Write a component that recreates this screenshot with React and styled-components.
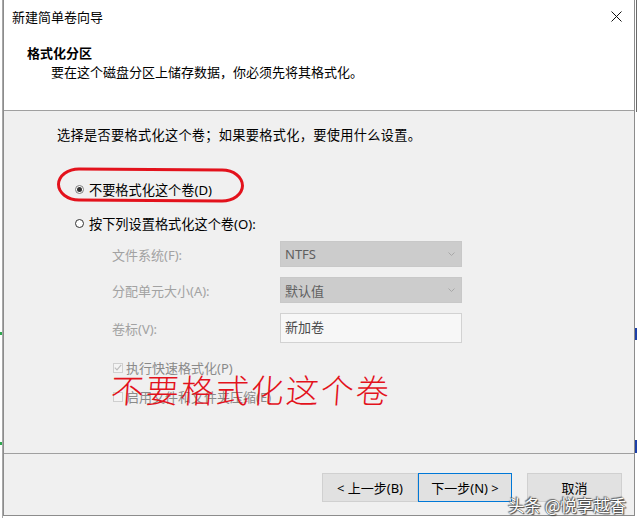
import React from "react";
import styled, { createGlobalStyle } from "styled-components";

const GlobalStyle = createGlobalStyle`
  html, body { margin: 0; padding: 0; background: #fff; }
  body {
    font-family: "Noto Sans", "Noto Sans CJK SC", sans-serif;
    font-size: 13px;
    color: #000;
  }
`;

const Screen = styled.div`
  display: flex;
  align-items: flex-start;
  width: 640px;
  height: 526px;
  overflow: hidden;
  background: #fff;
`;

const LeftStrip = styled.div`
  width: 2px;
  height: 518px;
  border-right: 1px solid #a8a8a8;
  background:
    linear-gradient(#fff 332px, #2fa84f 332px, #2fa84f 335px, #fff 335px, #fff 442px, #2fa84f 442px, #2fa84f 445px, #fff 445px);
`;

const RightStrip = styled.div`
  flex: 1;
  height: 526px;
  background:
    linear-gradient(90deg, transparent 1px, #6a6a6a 1px, #6a6a6a 2px, transparent 2px) 0 0 / 100% 112px no-repeat,
    linear-gradient(#fff 328px, #1c3fa8 328px, #1c3fa8 340px, #fff 340px, #fff 440px, #1c3fa8 440px, #1c3fa8 453px, #fff 453px) 0 0 / 2px 100% no-repeat,
    #fff;
`;

const Dialog = styled.div`
  position: relative;
  display: flex;
  flex-direction: column;
  box-sizing: border-box;
  width: 632px;
  height: 516px;
  border: 1px solid #8c8c8c;
  border-top: 0;
  background: #f0f0f0;
  font-family: "Noto Sans", "Noto Sans CJK SC", sans-serif;
`;

const Header = styled.header`
  display: flex;
  flex-direction: column;
  height: 110px;
  background: #fff;
  border-bottom: 1px solid #a0a0a0;
`;

const TitleBar = styled.div`
  display: flex;
  align-items: center;
  justify-content: space-between;
  height: 32px;
  padding-left: 8px;
  font-size: 13px;
  color: #000;
`;

const CloseButton = styled.div`
  display: flex;
  align-items: center;
  justify-content: center;
  width: 36px;
  height: 32px;
`;

const Heading = styled.div`
  margin-top: 12px;
  padding-left: 23px;
  font-size: 13px;
  font-weight: 700;
  line-height: 19px;
`;

const SubHeading = styled.div`
  padding-left: 47px;
  font-size: 13px;
  line-height: 19px;
`;

const Body = styled.main`
  flex: 1;
  padding: 15px 0 0 53px;
`;

const Intro = styled.div`
  font-size: 13.2px;
  letter-spacing: 0.3px;
  line-height: 19px;
`;

const RadioGroup = styled.div`
  display: flex;
  flex-direction: column;
  gap: 15px;
  margin-top: 35px;
  padding-left: 18px;
`;

const RadioRow = styled.label`
  display: flex;
  align-items: center;
  gap: 5px;
  height: 19px;
  font-size: 13.2px;
`;

const RadioDot = styled.span`
  position: relative;
  box-sizing: border-box;
  width: 9px;
  height: 9px;
  border-radius: 50%;
  border: 1px solid ${(p) => (p.$checked ? "#7a7a7a" : "#333")};
  background: #fff;
  &::after {
    content: "";
    display: ${(p) => (p.$checked ? "block" : "none")};
    position: absolute;
    left: 1px;
    top: 1px;
    width: 5px;
    height: 5px;
    border-radius: 50%;
    background: #333;
  }
`;

const FieldGrid = styled.div`
  display: grid;
  grid-template-columns: 168px 182px;
  grid-template-rows: 26px 26px 30px;
  row-gap: 10px;
  margin-top: 8px;
  padding-left: 55px;
`;

const FieldLabel = styled.div`
  display: flex;
  align-items: center;
  color: #a2a2a2;
  font-size: 13px;
`;

const Combo = styled.div`
  display: flex;
  align-items: center;
  justify-content: space-between;
  box-sizing: border-box;
  padding: 0 6px 0 4px;
  background: #cccccc;
  border: 1px solid #c8c8c8;
  color: #5f5f5f;
  font-size: 13px;
`;

const TextBox = styled.div`
  box-sizing: border-box;
  padding: 4px 0 0 4px;
  background: #f7f7f7;
  border: 1px solid #d2d2d2;
  color: #4a4a4a;
  font-size: 13px;
  line-height: 19px;
`;

const CheckList = styled.div`
  display: flex;
  flex-direction: column;
  gap: 10px;
  margin-top: 15px;
  padding-left: 56px;
`;

const CheckRow = styled.label`
  display: flex;
  align-items: center;
  gap: 3px;
  height: 19px;
  color: #8a8a8a;
  font-size: 13px;
`;

const CheckBox = styled.span`
  display: flex;
  align-items: center;
  justify-content: center;
  box-sizing: border-box;
  width: 10px;
  height: 10px;
  border: 1px solid #cfcfcf;
  background: #f4f4f4;
`;

const Footer = styled.footer`
  display: flex;
  justify-content: flex-end;
  box-sizing: border-box;
  height: 62px;
  padding: 19px 12px 0 0;
  border-top: 1px solid #a0a0a0;
`;

const Button = styled.div`
  display: flex;
  align-items: center;
  justify-content: center;
  box-sizing: border-box;
  width: ${(p) => p.$w}px;
  height: 29px;
  margin-left: ${(p) => (p.$spaced ? 15 : 0)}px;
  background: #e1e1e1;
  border: 1px solid ${(p) => (p.$primary ? "#0078d7" : "#d0d0d0")};
  color: #000;
  font-size: 13px;
  line-height: 16px;
`;

const Annotation = styled.div`
  position: absolute;
  left: 53px;
  top: 168px;
  width: 187px;
  height: 34px;
  box-sizing: border-box;
  border: 3px solid #e3121c;
  border-radius: 22px / 17px;
  transform: rotate(0.4deg);
  pointer-events: none;
`;

const Scribble = styled.div`
  position: absolute;
  left: 107px;
  top: 369px;
  color: #e3121c;
  font-family: "Noto Sans CJK SC", sans-serif;
  font-size: 33px;
  font-weight: 200;
  letter-spacing: 2px;
  line-height: 40px;
  transform: skewX(-4deg);
  pointer-events: none;
`;

const Watermark = styled.div`
  position: absolute;
  left: 504px;
  top: 497px;
  color: #fff;
  font-family: "Noto Sans CJK SC", sans-serif;
  font-size: 16.5px;
  line-height: 16px;
  white-space: nowrap;
  text-shadow: 0 0 1px #333, 1px 1px 1px #444, -1px -1px 1px #666;
  pointer-events: none;
`;

const Chevron = () => (
  <svg width="7" height="4" viewBox="0 0 7 4">
    <path d="M0.5 0.5 L3.5 3.5 L6.5 0.5" fill="none" stroke="#a8a8a8" strokeWidth="1" />
  </svg>
);

const CloseIcon = () => (
  <svg width="11" height="11" viewBox="0 0 11 11">
    <path d="M0.5 0.5 L10.5 10.5 M10.5 0.5 L0.5 10.5" stroke="#111" strokeWidth="1" />
  </svg>
);

const CheckIcon = () => (
  <svg width="8" height="7" viewBox="0 0 8 7">
    <path d="M0.8 3.6 L3 5.8 L7.2 0.9" fill="none" stroke="#bdbdbd" strokeWidth="1.2" />
  </svg>
);

const fields = [
  { label: "文件系统(F):", value: "NTFS", combo: true },
  { label: "分配单元大小(A):", value: "默认值", combo: true },
  { label: "卷标(V):", value: "新加卷", combo: false },
];

export default function App() {
  return (
    <Screen>
      <GlobalStyle />
      <LeftStrip />
      <Dialog>
        <Header>
          <TitleBar>
            <span>新建简单卷向导</span>
            <CloseButton>
              <CloseIcon />
            </CloseButton>
          </TitleBar>
          <Heading>格式化分区</Heading>
          <SubHeading>要在这个磁盘分区上储存数据，你必须先将其格式化。</SubHeading>
        </Header>

        <Body>
          <Intro>选择是否要格式化这个卷；如果要格式化，要使用什么设置。</Intro>

          <RadioGroup>
            <RadioRow>
              <RadioDot $checked />
              不要格式化这个卷(D)
            </RadioRow>
            <RadioRow>
              <RadioDot />
              按下列设置格式化这个卷(O):
            </RadioRow>
          </RadioGroup>

          <FieldGrid>
            {fields.map((f) => (
              <React.Fragment key={f.label}>
                <FieldLabel>{f.label}</FieldLabel>
                {f.combo ? (
                  <Combo>
                    {f.value}
                    <Chevron />
                  </Combo>
                ) : (
                  <TextBox>{f.value}</TextBox>
                )}
              </React.Fragment>
            ))}
          </FieldGrid>

          <CheckList>
            <CheckRow>
              <CheckBox>
                <CheckIcon />
              </CheckBox>
              执行快速格式化(P)
            </CheckRow>
            <CheckRow>
              <CheckBox />
              启用文件和文件夹压缩(E)
            </CheckRow>
          </CheckList>
        </Body>

        <Footer>
          <Button $w={96}>&lt; 上一步(B)</Button>
          <Button $w={94} $primary>下一步(N) &gt;</Button>
          <Button $w={95} $spaced>取消</Button>
        </Footer>

        <Annotation />
        <Scribble>不要格式化这个卷</Scribble>
        <Watermark>头条 @悦享越香</Watermark>
      </Dialog>
      <RightStrip />
    </Screen>
  );
}
